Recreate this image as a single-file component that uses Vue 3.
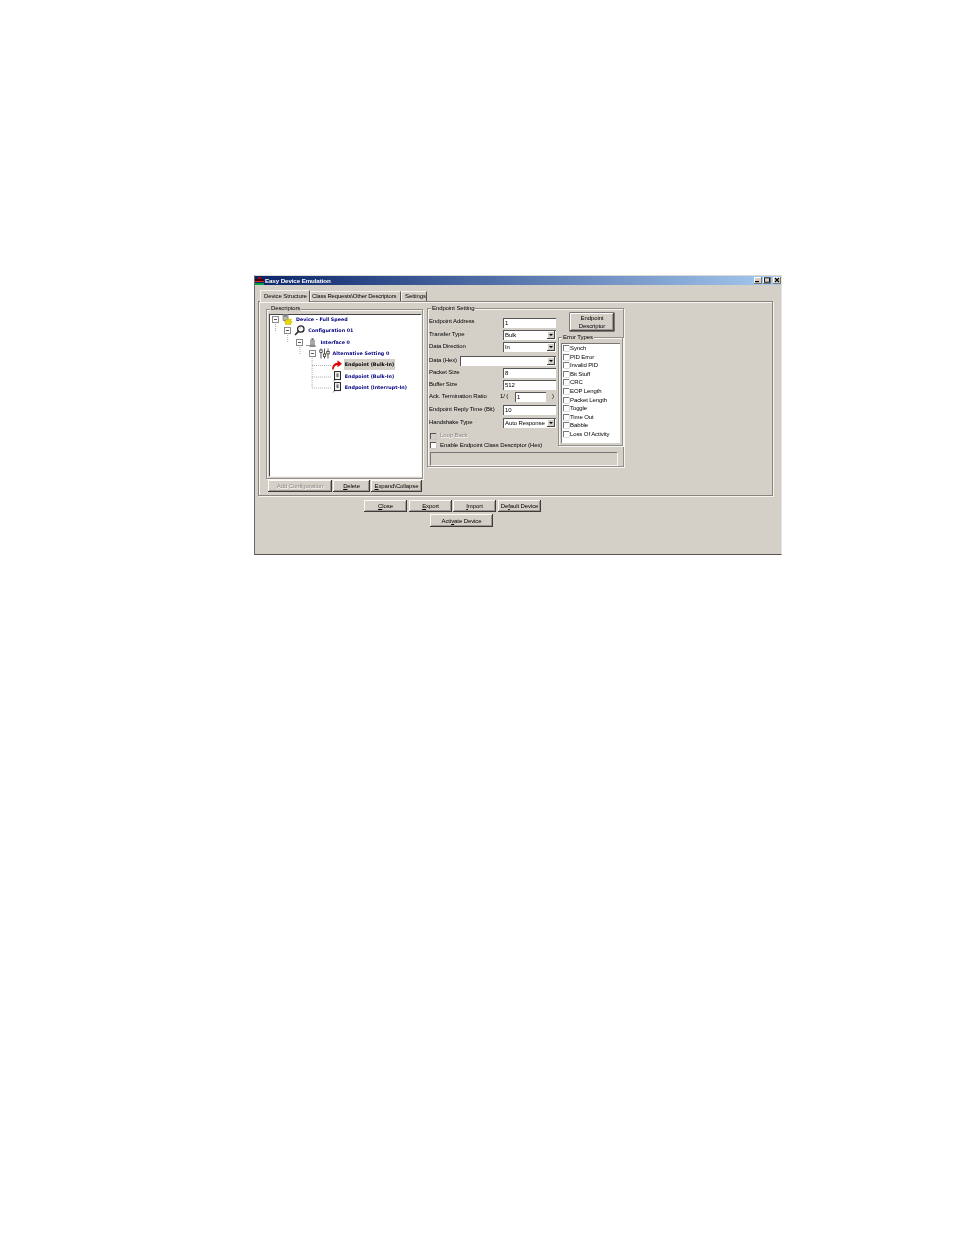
<script setup>
const tree = [
  { label: 'Device - Full Speed', icon: 'device', depth: 0, box: true },
  { label: 'Configuration 01', icon: 'config', depth: 1, box: true },
  { label: 'Interface 0', icon: 'iface', depth: 2, box: true },
  { label: 'Alternative Setting 0', icon: 'alt', depth: 3, box: true },
  { label: 'Endpoint (Bulk-In)', icon: 'arrow', depth: 4, selected: true },
  { label: 'Endpoint (Bulk-In)', icon: 'ep', depth: 4 },
  { label: 'Endpoint (Interrupt-In)', icon: 'ep', depth: 4 },
]
const errors = ['Synch', 'PID Error', 'Invalid PID', 'Bit Stuff', 'CRC', 'EOP Length', 'Packet Length', 'Toggle', 'Time Out', 'Babble', 'Loss Of Activity']
</script>

<template>
  <div class="page">
    <div class="window">
      <div class="titlebar">
        <svg class="appicon" viewBox="0 0 9 8" width="9" height="8">
          <rect x="3" y="0" width="3" height="2" fill="#b00000" />
          <rect x="0" y="2" width="9" height="2" fill="#400000" />
          <rect x="0" y="4" width="9" height="1" fill="#e03020" />
          <rect x="0" y="6" width="9" height="2" fill="#00a040" />
        </svg>
        <span class="title">Easy Device Emulation</span>
        <div class="controls">
          <span class="ctl"><svg viewBox="0 0 8 6" width="8" height="6"><rect x="1" y="4" width="4" height="1.2" fill="#000" /></svg></span>
          <span class="ctl"><svg viewBox="0 0 8 6" width="8" height="6"><rect x="1.5" y="0.8" width="5" height="4.4" fill="none" stroke="#000" stroke-width="0.9" /></svg></span>
          <span class="ctl close"><svg viewBox="0 0 8 6" width="8" height="6"><path d="M2 1l4 4M6 1l-4 4" stroke="#000" stroke-width="1.1" /></svg></span>
        </div>
      </div>

      <div class="tabs">
        <div class="tab active">Device Structure</div>
        <div class="tab t2">Class Requests\Other Descriptors</div>
        <div class="tab t3">Settings</div>
      </div>

      <div class="panel">
        <div class="leftcol">
          <div class="group descriptors">
            <span class="legend">Descriptors</span>
            <div class="tree">
              <svg class="treelines" width="152" height="162" viewBox="0 0 152 162">
                <path d="M5.5 7V16M17.7 18V28M29.9 30V39M42.1 41V73M42.1 50.5H62M42.1 62H62M42.1 73H62" fill="none" stroke="#888" stroke-width="0.7" stroke-dasharray="1 1" />
              </svg>
              <div v-for="(n, i) in tree" :key="i" class="node" :style="{ paddingLeft: 2 + n.depth * 12.2 + 'px' }">
                <span v-if="n.box" class="box"></span>
                <span v-else class="nobox"></span>
                <span class="icon">
                  <svg v-if="n.icon === 'device'" viewBox="0 0 11 11" width="11" height="11">
                    <rect x="1" y="0.5" width="5" height="6" fill="#b8b8b8" stroke="#666" stroke-width="0.6" />
                    <rect x="2" y="1.5" width="3" height="1" fill="#555" />
                    <path d="M6.5 4l1 1.6 1.9-.6-.6 1.9 1.6 1-1.6 1 .2 1.8-1.8-.4-1 1.4-1-1.4-1.9.4.4-1.8-1.5-1 1.6-1-.4-1.8 1.8.6z" fill="#e8d800" stroke="#8a8000" stroke-width="0.3" />
                  </svg>
                  <svg v-else-if="n.icon === 'config'" viewBox="0 0 11 11" width="11" height="11">
                    <circle cx="6.8" cy="4" r="3.2" fill="#fff" stroke="#222" stroke-width="1.3" />
                    <path d="M4.5 6.4L1 10" stroke="#333" stroke-width="1.6" />
                    <path d="M5.6 3.4l1.4-1" stroke="#888" stroke-width="0.7" />
                  </svg>
                  <svg v-else-if="n.icon === 'iface'" viewBox="0 0 11 11" width="11" height="11">
                    <rect x="5.5" y="1" width="2" height="2" fill="#777" />
                    <rect x="4.5" y="3" width="4" height="5" fill="#a8a8a8" stroke="#777" stroke-width="0.4" />
                    <rect x="3.5" y="8" width="6" height="2" fill="#888" />
                    <path d="M0 8.5h4" stroke="#999" stroke-width="1" />
                  </svg>
                  <svg v-else-if="n.icon === 'alt'" viewBox="0 0 11 11" width="11" height="11">
                    <path d="M2 0.5v10M5.5 0.5v10M9 0.5v10" stroke="#444" stroke-width="0.9" />
                    <rect x="0.8" y="2" width="2.4" height="2.4" fill="#fff" stroke="#222" stroke-width="0.7" />
                    <rect x="4.3" y="6" width="2.4" height="2.4" fill="#fff" stroke="#222" stroke-width="0.7" />
                    <rect x="7.8" y="3.5" width="2.4" height="2.4" fill="#fff" stroke="#222" stroke-width="0.7" />
                  </svg>
                  <svg v-else-if="n.icon === 'arrow'" viewBox="0 0 11 11" width="11" height="11">
                    <path d="M1.2 10.5C1 6.5 3.2 4 6.5 3.8V1.2L11 4.8 6.5 8.2V6C4.4 6.2 2.8 7.8 2.6 10.5z" fill="#e00000" />
                  </svg>
                  <svg v-else viewBox="0 0 11 11" width="11" height="11">
                    <path d="M2 10.5l2-2" stroke="#666" stroke-width="0.8" />
                    <rect x="3.5" y="0.6" width="6" height="8" fill="#f2f2f2" stroke="#111" stroke-width="0.9" />
                    <rect x="5.4" y="2.4" width="2.2" height="3.6" fill="#777" />
                  </svg>
                </span>
                <span class="nodelabel" :class="{ selected: n.selected }">{{ n.label }}</span>
              </div>
            </div>
          </div>
          <div class="btnrow">
            <button class="btn disabled w-add">Add Configuration</button>
            <button class="btn w-del"><u>D</u>elete</button>
            <button class="btn w-exp"><u>E</u>xpand\Collapse</button>
          </div>
        </div>

        <div class="group endpoint">
          <span class="legend">Endpoint Setting</span>
          <div class="epbody">
            <div class="epfields">
              <div class="fields">
                <span class="lbl top">Endpoint Address</span><span class="input">1</span>
                <span class="lbl">Transfer Type</span><span class="input combo">Bulk<i class="drop"></i></span>
                <span class="lbl">Data Direction</span><span class="input combo">In<i class="drop"></i></span>
                <div class="datarow"><span class="lbl">Data (Hex)</span><span class="input combo wide"><i class="drop"></i></span></div>
                <span class="lbl">Packet Size</span><span class="input">8</span>
                <span class="lbl">Buffer Size</span><span class="input">512</span>
                <span class="lbl">Ack. Termination Ratio</span>
                <div class="ratio"><span class="paren">1/ (</span><span class="input small">1</span><span class="paren">)</span></div>
                <span class="lbl">Endpoint Reply Time (Bit)</span><span class="input">10</span>
                <span class="lbl">Handshake Type</span><span class="input combo">Auto Response<i class="drop"></i></span>
              </div>
              <label class="check disabledtxt"><span class="cb grey"></span>Loop Back</label>
              <label class="check"><span class="cb"></span>Enable Endpoint Class Descriptor (Hex)</label>
            </div>
            <div class="epright">
              <button class="btn epbtn">Endpoint<br />Descriptor</button>
              <div class="group errgroup">
                <span class="legend">Error Types</span>
                <div class="errlist">
                  <div v-for="e in errors" :key="e" class="erritem"><span class="cb small"></span>{{ e }}</div>
                </div>
              </div>
            </div>
          </div>
          <div class="classfield"></div>
        </div>
      </div>

      <div class="footer">
        <button class="btn f"><u>C</u>lose</button>
        <button class="btn f g1"><u>E</u>xport</button>
        <button class="btn f g2"><u>I</u>mport</button>
        <button class="btn f g3">De<u>f</u>ault Device</button>
      </div>
      <button class="btn activate">Acti<u>v</u>ate Device</button>
    </div>
  </div>
</template>

<style scoped>
.page {
  height: 1235px;
  background: #fff;
  padding: 275px 0 0 254px;
  box-sizing: border-box;
  font-family: "Liberation Sans", Arial, sans-serif;
  font-size: 6px;
  letter-spacing: -0.1px;
  color: #000;
}
.window {
  width: 528px;
  height: 280px;
  box-sizing: border-box;
  background: #d4d0c8;
  border-left: 1px solid #6a6a66;
  border-bottom: 1px solid #55554f;
  border-top: 1px solid #dedbd4;
  border-right: 1px solid #e6e4de;
  filter: blur(0.3px);
}
.titlebar {
  height: 9px;
  display: flex;
  align-items: center;
  background: linear-gradient(90deg, #0a246a, #a6caf0);
}
.appicon { flex: none; }
.title {
  margin-left: 1px;
  color: #fff;
  font-weight: 700;
  font-size: 6.2px;
  white-space: nowrap;
}
.controls {
  margin-left: auto;
  display: flex;
  gap: 1px;
  align-items: center;
}
.ctl {
  display: flex;
  width: 8px;
  height: 7px;
  background: #d4d0c8;
  box-shadow: inset -1px -1px 0 #777, inset 1px 1px 0 #fff;
}
.ctl.close { margin-left: 1px; }
.tabs {
  display: flex;
  align-items: flex-end;
  height: 16px;
  padding-left: 5px;
  box-sizing: border-box;
}
.tab {
  height: 10px;
  line-height: 8px;
  white-space: nowrap;
  border-top: 1px solid #f4f3ef;
  border-left: 1px solid #f4f3ef;
  border-right: 1px solid #555;
  box-sizing: border-box;
  padding: 0 1px;
}
.tab.active {
  width: 50px;
  height: 12px;
  line-height: 10px;
  padding-left: 3px;
  position: relative;
  z-index: 1;
  margin-bottom: -1px;
  background: #d4d0c8;
}
.tab.t2 { width: 91px; padding-left: 1px; letter-spacing: -0.2px; }
.tab.t3 { width: 26px; padding-left: 3px; }
.panel {
  width: 515px;
  height: 195px;
  margin-left: 3px;
  box-sizing: border-box;
  border: 1px solid #85847f;
  box-shadow: inset 1px 1px 0 #f6f5f1, 1px 1px 0 #f4f3ef;
  padding: 7px 0 0 7px;
  display: flex;
  gap: 4px;
}
.leftcol { width: 157px; flex: none; }
.group {
  position: relative;
  box-sizing: border-box;
  border: 1px solid #918f89;
  box-shadow: inset 1px 1px 0 #f6f5f1, 1px 1px 0 #f6f5f1;
}
.legend {
  position: absolute;
  top: -4px;
  left: 3px;
  padding: 0 1px;
  background: #d4d0c8;
  line-height: 7px;
  white-space: nowrap;
}
.descriptors {
  height: 170px;
  padding: 4px 1px 2px 2px;
}
.descriptors .legend { top: -5px; }
.tree {
  position: relative;
  height: 162px;
  box-sizing: border-box;
  background: #fff;
  border-top: 1px solid #444;
  border-left: 1px solid #444;
  box-shadow: 1px 1px 0 #f6f5f1;
}
.treelines {
  position: absolute;
  left: 0;
  top: 0;
  pointer-events: none;
}
.node {
  position: relative;
  display: flex;
  align-items: center;
  height: 11.3px;
  letter-spacing: 0;
}
.node:first-of-type { margin-top: -1px; }
.box {
  flex: none;
  width: 7px;
  height: 7px;
  box-sizing: border-box;
  border: 1px solid #8a8a8a;
  background: linear-gradient(#555, #555) center / 3px 1px no-repeat #fff;
  margin-right: 3px;
}
.nobox {
  flex: none;
  width: 10px;
}
.icon {
  flex: none;
  display: flex;
  width: 13px;
  height: 11px;
}
.nodelabel {
  font-family: "DejaVu Sans", sans-serif;
  font-weight: 700;
  font-size: 4.8px;
  line-height: 9px;
  padding: 0 1px;
  color: #000080;
  white-space: nowrap;
}
.nodelabel.selected {
  background: #d4d0c8;
  color: #000;
  height: 11px;
  line-height: 11px;
}
.btnrow {
  display: flex;
  gap: 1px;
  margin: 1px 0 0 2px;
}
.btn {
  display: block;
  padding: 0;
  box-sizing: border-box;
  height: 12px;
  font-family: inherit;
  font-size: 6px;
  letter-spacing: -0.1px;
  line-height: 1;
  color: #000;
  background: #d4d0c8;
  border: 0;
  border-radius: 0;
  box-shadow: inset -1px -1px 0 #3c3c3c, inset 1px 1px 0 #fbfaf6, inset -2px -2px 0 #9b9992;
  white-space: nowrap;
}
.btn.disabled { color: #8a8983; text-shadow: 0.5px 0.5px 0 #fff; }
.w-add { width: 64px; }
.w-del { width: 37px; }
.w-exp { width: 51px; }
.endpoint {
  width: 197px;
  height: 159px;
  margin-top: -1px;
  flex: none;
}
.epbody {
  display: flex;
  height: 143px;
}
.epfields {
  width: 129px;
  padding: 9px 0 0 1px;
  box-sizing: border-box;
  flex: none;
}
.fields {
  display: grid;
  grid-template-columns: 74px 53px;
  grid-template-rows: 12px 12px 14px 12px 12px 12px 13px 13px 13px;
}
.lbl {
  line-height: 9px;
  margin-top: 0.3px;
  white-space: nowrap;
}
.lbl.top { margin-top: -1px; }
.input {
  display: block;
  position: relative;
  height: 10px;
  line-height: 9px;
  box-sizing: border-box;
  background: #fff;
  border-top: 1px solid #555;
  border-left: 1px solid #555;
  padding-left: 1px;
  white-space: nowrap;
}
.datarow {
  grid-column: 1 / 3;
  display: flex;
}
.datarow .lbl { width: 31px; flex: none; }
.input.wide { flex: 1; }
.drop {
  position: absolute;
  right: 1px;
  top: 0;
  width: 8px;
  height: 8px;
  background: #d4d0c8;
  box-shadow: inset -1px -1px 0 #444, inset 1px 1px 0 #fff;
}
.drop::after {
  content: "";
  position: absolute;
  left: 2px;
  top: 3px;
  border: 2px solid transparent;
  border-top: 2px solid #000;
  border-bottom: 0;
}
.ratio {
  display: flex;
  width: 53px;
}
.paren { line-height: 9px; white-space: nowrap; }
.paren:first-child { margin-left: -3px; width: 15px; flex: none; }
.paren:last-child { margin-left: 6px; }
.input.small { width: 31px; flex: none; }
.check {
  display: flex;
  align-items: center;
  height: 9.5px;
  line-height: 9px;
  padding-left: 1px;
  white-space: nowrap;
}
.disabledtxt { color: #8a8983; text-shadow: 0.5px 0.5px 0 #fff; }
.cb {
  flex: none;
  width: 6px;
  height: 6px;
  box-sizing: border-box;
  margin-right: 4px;
  background: #fff;
  border-top: 1px solid #555;
  border-left: 1px solid #555;
  box-shadow: 0.5px 0.5px 0 #bbb;
}
.cb.grey { background: #d4d0c8; }
.cb.small { margin-right: 1px; border-color: #777; }
.epright {
  flex: none;
  width: 65px;
  margin-left: 1px;
}
.epbtn {
  width: 44px;
  height: 18px;
  margin: 4px 0 6px 12px;
  padding-top: 1px;
  line-height: 7.5px;
  box-shadow: 0 0 0 0.5px #222, inset -1px -1px 0 #444, inset 1px 1px 0 #fff, inset -2px -2px 0 #9b9992;
}
.errgroup {
  width: 65px;
  height: 109px;
  padding: 5px 2px 3px 2px;
}
.errlist {
  height: 100px;
  box-sizing: border-box;
  background: #fff;
  border-top: 1px solid #777;
  border-left: 1px solid #777;
  padding: 0 0 0 1px;
}
.erritem {
  display: flex;
  align-items: center;
  height: 8.55px;
  white-space: nowrap;
}
.classfield {
  width: 187px;
  height: 13px;
  margin-left: 2px;
  box-sizing: border-box;
  background: #d4d0c8;
  border-top: 1px solid #777;
  border-left: 1px solid #777;
  box-shadow: 1px 1px 0 #f6f5f1;
}
.footer {
  display: flex;
  margin: 4px 0 0 109px;
}
.f { width: 43px; }
.g1 { margin-left: 2px; }
.g2 { margin-left: 1px; }
.g3 { margin-left: 2px; }
.activate {
  width: 63px;
  height: 13px;
  margin: 2px 0 0 175px;
}
</style>
